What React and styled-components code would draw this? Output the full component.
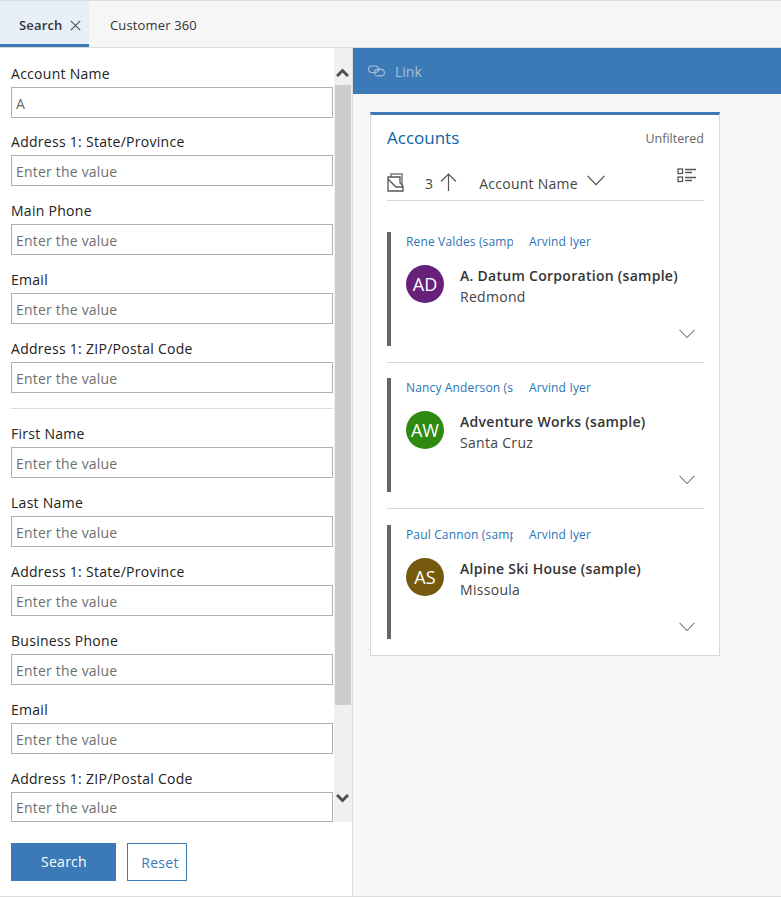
import React from "react";
import styled, { createGlobalStyle } from "styled-components";

const GlobalStyle = createGlobalStyle`
  html, body { margin: 0; padding: 0; background: #fff; }
  body { font-family: "Open Sans", "Noto Sans", sans-serif; color: #333; }
  * { box-sizing: border-box; }
`;

const topFields = ["Address 1: State/Province", "Main Phone", "Email", "Address 1: ZIP/Postal Code"];
const bottomFields = ["First Name", "Last Name", "Address 1: State/Province", "Business Phone", "Email", "Address 1: ZIP/Postal Code"];

const accounts = [
  { contact: "Rene Valdes (sample)", owner: "Arvind Iyer", name: "A. Datum Corporation (sample)", city: "Redmond", initials: "AD", color: "#68217a" },
  { contact: "Nancy Anderson (sample)", owner: "Arvind Iyer", name: "Adventure Works (sample)", city: "Santa Cruz", initials: "AW", color: "#2f8a12" },
  { contact: "Paul Cannon (sample)", owner: "Arvind Iyer", name: "Alpine Ski House (sample)", city: "Missoula", initials: "AS", color: "#75590d" },
];

const Chevron = ({ size = 16 }) => (
  <svg width={size} height={size * 0.6} viewBox="0 0 16 9.6" fill="none" stroke="#444" strokeWidth="1">
    <path d="M0.5 0.8 L8 8.6 L15.5 0.8" />
  </svg>
);

const ScrollArrow = ({ up }) => (
  <svg width="13" height="9" viewBox="0 0 13 9" fill="none" stroke="#505050" strokeWidth="3">
    <path d={up ? "M1 8 L6.5 2.5 L12 8" : "M1 1 L6.5 6.5 L12 1"} />
  </svg>
);

const App = () => {
  return (
    <Page>
      <GlobalStyle />
      <TabBar>
        <ActiveTab>
          Search
          <svg width="11" height="11" viewBox="0 0 11 11" stroke="#555" strokeWidth="1.2">
            <path d="M0.8 0.8 L10.2 10.2 M10.2 0.8 L0.8 10.2" />
          </svg>
        </ActiveTab>
        <Tab>Customer 360</Tab>
      </TabBar>
      <Body>
        <LeftPanel>
          <ScrollRow>
            <Form>
              <Field $first>
                <Label>Account Name</Label>
                <Input defaultValue="A" />
              </Field>
              {topFields.map((f, i) => (
                <Field key={i}>
                  <Label>{f}</Label>
                  <Input placeholder="Enter the value" />
                </Field>
              ))}
              <Divider />
              {bottomFields.map((f, i) => (
                <Field key={i}>
                  <Label>{f}</Label>
                  <Input placeholder="Enter the value" />
                </Field>
              ))}
            </Form>
            <Scrollbar>
              <ScrollUp><ScrollArrow up /></ScrollUp>
              <Thumb />
              <ScrollDown><ScrollArrow /></ScrollDown>
            </Scrollbar>
          </ScrollRow>
          <Buttons>
            <SearchButton>Search</SearchButton>
            <ResetButton>Reset</ResetButton>
          </Buttons>
        </LeftPanel>
        <RightPanel>
          <CommandBar>
            <svg width="17" height="12" viewBox="0 0 17 12" fill="none" stroke="#a8c0da" strokeWidth="1.1">
              <rect x="0.6" y="1" width="10" height="6.5" rx="3.25" />
              <rect x="6.4" y="4.4" width="10" height="6.5" rx="3.25" />
            </svg>
            <LinkText>Link</LinkText>
          </CommandBar>
          <Card>
            <CardHeader>
              <CardTitle>Accounts</CardTitle>
              <Unfiltered>Unfiltered</Unfiltered>
            </CardHeader>
            <SortRow>
              <SortIcon>
                <svg width="17" height="19" viewBox="0 0 17 19" fill="none" stroke="#555" strokeWidth="1.3">
                  <path d="M4 4 V1 H15 V14" stroke="#999" strokeWidth="2" />
                  <path d="M1 4 H13 V10 L16 13 V18 H1 Z" fill="#fff" />
                  <path d="M1 6 L9 14 H16" />
                </svg>
              </SortIcon>
              <Count>3</Count>
              <SortIcon>
                <svg width="17" height="18" viewBox="0 0 17 18" fill="none" stroke="#555" strokeWidth="1.2">
                  <path d="M8.5 18 V1 M1 8.5 L8.5 1 L16 8.5" />
                </svg>
              </SortIcon>
              <SortName>Account Name</SortName>
              <SortChevron>
                <Chevron size={18} />
              </SortChevron>
              <ViewIcon>
                <svg width="19" height="15" viewBox="0 0 19 15" fill="none" stroke="#555" strokeWidth="1.3">
                  <rect x="1" y="1" width="4.5" height="4.5" />
                  <rect x="1" y="9" width="4.5" height="4.5" />
                  <path d="M8 1.5 H19 M8 4.5 H15 M8 9.5 H19 M8 12.5 H15" />
                </svg>
              </ViewIcon>
            </SortRow>
            <RowList>
              {accounts.map((a, i) => (
                <Row key={i} $last={i === accounts.length - 1}>
                  <RowInner>
                    <RowLinks>
                      <ContactLink>{a.contact}</ContactLink>
                      <OwnerLink>{a.owner}</OwnerLink>
                    </RowLinks>
                    <RowMain>
                      <Avatar $color={a.color}>{a.initials}</Avatar>
                      <RowText>
                        <AccountName>{a.name}</AccountName>
                        <City>{a.city}</City>
                      </RowText>
                    </RowMain>
                    <RowFoot>
                      <Chevron size={16} />
                    </RowFoot>
                  </RowInner>
                </Row>
              ))}
            </RowList>
          </Card>
        </RightPanel>
      </Body>
    </Page>
  );
};

export default App;

const Page = styled.div`
  width: 781px;
  height: 897px;
  display: flex;
  flex-direction: column;
  border-top: 1px solid #dcdcdc;
  border-bottom: 1px solid #dcdcdc;
  overflow: hidden;
`;

const TabBar = styled.div`
  height: 47px;
  flex: none;
  display: flex;
  background: #f6f6f6;
  border-bottom: 1px solid #dcdcdc;
`;

const Tab = styled.div`
  display: flex;
  align-items: center;
  padding: 2px 0 0 21px;
  font-size: 13px;
  letter-spacing: 0.15px;
  color: #333;
`;

const ActiveTab = styled(Tab)`
  width: 89px;
  padding: 5px 0 0 19px;
  gap: 8px;
  font-weight: 600;
  background: #e7f0f8;
  border-bottom: 3px solid #3b79b7;
`;

const Body = styled.div`
  flex: 1;
  display: flex;
  min-height: 0;
`;

const LeftPanel = styled.div`
  width: 353px;
  flex: none;
  display: flex;
  flex-direction: column;
  border-right: 1px solid #dcdcdc;
  background: #fff;
`;

const ScrollRow = styled.div`
  height: 774px;
  flex: none;
  display: flex;
  overflow: hidden;
`;

const Form = styled.div`
  flex: 1;
  padding: 15px 1px 0 11px;
  min-width: 0;
  & > div:last-child input {
    height: 30px;
  }
`;

const Field = styled.div`
  height: ${(p) => (p.$first ? "68px" : "69px")};
`;

const Label = styled.div`
  height: 24px;
  line-height: 21px;
  font-size: 14px;
  letter-spacing: 0.28px;
  color: #222;
`;

const Input = styled.input`
  display: block;
  width: 322px;
  height: 31px;
  padding: 1px 4px 0;
  border: 1px solid #b0b0b0;
  outline: none;
  background: #fff;
  font-family: inherit;
  font-size: 14px;
  letter-spacing: 0.2px;
  color: #666;
  &::placeholder {
    color: #6f6f6f;
    opacity: 1;
  }
`;

const Divider = styled.div`
  height: 1px;
  width: 322px;
  background: #dcdcdc;
  margin: 1px 0 14px;
`;

const Scrollbar = styled.div`
  width: 18px;
  flex: none;
  display: flex;
  flex-direction: column;
  background: #f0f0f0;
`;

const ScrollUp = styled.div`
  height: 37px;
  flex: none;
  display: flex;
  align-items: center;
  justify-content: center;
  padding: 11px 1px 0 0;
`;

const ScrollDown = styled(ScrollUp)`
  padding: 0 1px 11px 0;
`;

const Thumb = styled.div`
  flex: 1;
  margin: 0 1px 80px 1px;
  background: #cdcdcd;
`;

const Buttons = styled.div`
  display: flex;
  gap: 11px;
  padding: 21px 0 0 11px;
`;

const SearchButton = styled.button`
  width: 105px;
  height: 38px;
  border: none;
  padding: 0 0 2px 1px;
  background: #3b79b7;
  color: #fff;
  font-family: inherit;
  font-size: 14px;
  letter-spacing: 0.25px;
`;

const ResetButton = styled.button`
  width: 60px;
  height: 38px;
  padding: 0 0 0 6px;
  border: 1px solid #3b79b7;
  background: #fff;
  color: #3b79b7;
  font-family: inherit;
  font-size: 14px;
  letter-spacing: 0.25px;
`;

const RightPanel = styled.div`
  flex: 1;
  background: #f8f7f6;
  min-width: 0;
`;

const CommandBar = styled.div`
  height: 46px;
  background: #3b79b7;
  display: flex;
  align-items: center;
  gap: 10px;
  padding-left: 15px;
`;

const LinkText = styled.span`
  color: #a8c0da;
  font-size: 14px;
`;

const Card = styled.div`
  width: 350px;
  margin: 18px 0 0 17px;
  height: 544px;
  background: #fff;
  border: 1px solid #d8d8d8;
  border-top: 3px solid #3b79b7;
  padding: 0 15px 0 16px;
`;

const CardHeader = styled.div`
  height: 38px;
  padding-bottom: 2px;
  display: flex;
  align-items: flex-end;
  justify-content: space-between;
`;

const CardTitle = styled.div`
  font-size: 17px;
  color: #0f5fa6;
  line-height: 26px;
`;

const Unfiltered = styled.div`
  font-size: 12.5px;
  color: #666;
  line-height: 24px;
`;

const SortRow = styled.div`
  height: 48px;
  display: flex;
  align-items: center;
  padding-top: 13px;
  border-bottom: 1px solid #d8d8d8;
  color: #444;
  font-size: 14px;
  letter-spacing: 0.25px;
`;

const SortIcon = styled.div`
  display: flex;
  margin-top: -2px;
`;

const Count = styled.span`
  margin: 0 7px 0 21px;
`;

const SortName = styled.span`
  margin: 0 9px 0 22px;
`;

const SortChevron = styled.div`
  display: flex;
  margin-top: -5px;
`;

const ViewIcon = styled.div`
  margin: -15px 8px 0 auto;
  display: flex;
`;

const RowList = styled.div`
  padding-top: 15.4px;
`;

const Row = styled.div`
  padding: 15.4px 0 16px;
  border-bottom: ${(p) => (p.$last ? "none" : "1px solid #d8d8d8")};
`;

const RowInner = styled.div`
  height: 114px;
  padding: 1px 9px 0 15px;
  border-left: 4px solid #666;
`;

const RowLinks = styled.div`
  display: flex;
  font-size: 12px;
  letter-spacing: 0.15px;
  line-height: 18px;
  color: #2a75b5;
`;

const ContactLink = styled.div`
  width: 107px;
  overflow: hidden;
  white-space: nowrap;
`;

const OwnerLink = styled.div`
  margin-left: 16px;
`;

const RowMain = styled.div`
  display: flex;
  align-items: flex-start;
  margin-top: 14px;
`;

const Avatar = styled.div`
  width: 38px;
  height: 38px;
  border-radius: 50%;
  flex: none;
  display: flex;
  align-items: center;
  justify-content: center;
  background: ${(p) => p.$color};
  color: #fff;
  font-size: 18px;
`;

const RowText = styled.div`
  margin-left: 16px;
`;

const AccountName = styled.div`
  font-weight: 600;
  font-size: 14px;
  letter-spacing: 0.28px;
  line-height: 21px;
  color: #333;
`;

const City = styled.div`
  font-size: 14px;
  letter-spacing: 0.3px;
  line-height: 21px;
  color: #444;
`;

const RowFoot = styled.div`
  display: flex;
  justify-content: flex-end;
  padding-top: 22px;
`;
